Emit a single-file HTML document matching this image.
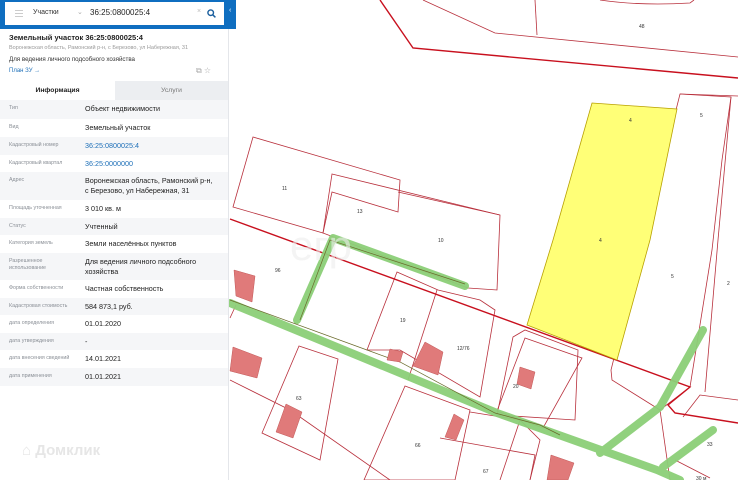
<!DOCTYPE html>
<html><head><meta charset="utf-8"><style>
*{margin:0;padding:0;box-sizing:border-box}
body{width:738px;height:480px;overflow:hidden;font-family:"Liberation Sans","DejaVu Sans",sans-serif;background:#fff;position:relative}
#map{position:absolute;left:0;top:0}
#panel{position:absolute;left:0;top:0;width:229px;height:480px;background:#fff;border-right:1px solid #e4e6ea}
#hdr{position:absolute;left:0;top:0;width:236px;height:29px;background:#0f6ec0}
#inp{position:absolute;left:5px;top:2px;width:219px;height:23px;background:#fff}
.row{position:absolute;left:0;width:228px;font-size:7.2px;color:#222}
.row .l{position:absolute;left:9px;top:5px;font-size:5.3px;color:#8a8f96;line-height:7px}
.row .v{position:absolute;left:85px;top:4px;line-height:10px}
.g{background:#f5f6f8}
a{color:#1d6fb8;text-decoration:none}
</style></head><body>
<svg id="map" width="738" height="480" viewBox="0 0 738 480">
<g fill="none" stroke="#b8303c" stroke-width="0.8">
<polyline points="423,0 495,33 738,57"/>
<line x1="535" y1="0" x2="537" y2="35"/>
<path d="M600,0 Q640,6 690,3 L694,0"/>
<polygon points="253,137 400,180 398,212 332,192 323,233 233,207"/>
<polygon points="332,174 500,215 497,290 468,288 323,233"/>
<polyline points="398,192 500,215"/>
<polygon points="680,94 731,97 722,160 712,250 690,387 660,410 612,380 611,370"/>
<line x1="680" y1="94" x2="738" y2="96"/>
<polyline points="731,97 718,240 705,392"/>
<polygon points="397,272 438,290 480,300 495,310 480,397 400,350 367,350"/>
<polyline points="437,290 408,380"/>
<polygon points="513,337 525,330 578,350 575,420 497,415"/>
<polygon points="525,338 582,358 543,428 497,411"/>
<polygon points="299,346 338,359 320,460 262,433"/>
<polyline points="230,380 290,410 390,480"/>
<polygon points="405,386 470,410 455,480 364,480"/>
<polyline points="470,412 520,420 540,440 530,480"/>
<polyline points="440,438 535,455 530,480"/>
<polyline points="520,420 500,480"/>
<polyline points="660,410 670,480"/>
<polyline points="683,417 700,395 738,400"/>
<polyline points="675,460 710,478"/>
<polyline points="230,318 236,305"/>
</g>
<g fill="none" stroke="#c8101e" stroke-width="1.4">
<polyline points="380,0 413,48 738,78"/>
<polyline points="230,219 690,387 668,405 675,413 738,423"/>
</g>
<polygon points="592,103 677,109 650,240 617,360 527,325 553,240" fill="#ffff77" stroke="#b8a000" stroke-width="0.8"/>
<g fill="none" stroke="#8ccf78" stroke-width="8" stroke-linecap="round" stroke-linejoin="round" opacity="0.95">
<polyline points="230,303 497,413 657,470 680,480"/>
<polyline points="297,320 333,238 465,286"/>
<polyline points="703,330 660,407 600,453"/>
<polyline points="713,430 663,467"/>
</g>
<g fill="none" stroke="#6a6a2a" stroke-width="0.7">
<polyline points="230,300 367,350 400,362 495,413 540,425 560,435"/>
<polyline points="300,320 330,240 465,284"/>
</g>
<g fill="#e07a7a" stroke="#c25858" stroke-width="0.5">
<polygon points="234,270 255,276 252,302 236,296"/>
<polygon points="233,347 262,358 257,378 230,371"/>
<polygon points="390,349 403,352 400,362 387,360"/>
<polygon points="425,342 443,352 438,375 413,366"/>
<polygon points="520,367 535,372 531,389 517,384"/>
<polygon points="286,404 302,412 293,438 276,432"/>
<polygon points="454,414 464,420 456,440 445,437"/>
<polygon points="551,455 574,463 568,480 547,480"/>
</g>
<g font-size="5" fill="#333" font-family="Liberation Sans,sans-serif">
<text x="639" y="28">48</text><text x="282" y="190">11</text><text x="357" y="213">13</text>
<text x="438" y="242">10</text><text x="629" y="122">4</text><text x="599" y="242">4</text>
<text x="700" y="117">5</text><text x="671" y="278">5</text><text x="727" y="285">2</text>
<text x="275" y="272">96</text><text x="400" y="322">19</text><text x="457" y="350">12/76</text>
<text x="513" y="388">20</text><text x="296" y="400">63</text><text x="415" y="447">66</text>
<text x="483" y="473">67</text><text x="707" y="446">33</text><text x="696" y="480">30 м</text>
</g>
<text x="290" y="260" font-size="42" fill="#eee" font-family="Liberation Sans,sans-serif" opacity="0.6">егр</text>
</svg>

<div id="panel">
<div id="hdr"><div id="inp">
<div style="position:absolute;left:10px;top:8px;width:8px;height:1px;background:#ccc;box-shadow:0 3px #ccc,0 6px #ccc"></div>
<div style="position:absolute;left:28px;top:7px;font-size:7px;color:#333">Участки</div>
<div style="position:absolute;left:72px;top:6px;font-size:7px;color:#aaa">⌄</div>
<div style="position:absolute;left:85px;top:6px;font-size:8px;color:#222">36:25:0800025:4</div>
<div style="position:absolute;left:192px;top:6px;font-size:7px;color:#bbb">×</div>
<svg style="position:absolute;left:202px;top:7px" width="9" height="9"><circle cx="3.7" cy="3.7" r="2.8" fill="none" stroke="#1b5f9e" stroke-width="1.4"/><line x1="5.8" y1="5.8" x2="8.4" y2="8.4" stroke="#1b5f9e" stroke-width="1.5"/></svg>
</div>
<div style="position:absolute;left:229px;top:7px;font-size:7px;color:#fff">‹</div></div>
<div style="position:absolute;left:9px;top:33px;font-size:7.5px;font-weight:bold;color:#222">Земельный участок 36:25:0800025:4</div>
<div style="position:absolute;left:9px;top:45px;font-size:5.5px;color:#999">Воронежская область, Рамонский р-н, с Березово, ул Набережная, 31</div>
<div style="position:absolute;left:9px;top:56px;font-size:6.2px;color:#333">Для ведения личного подсобного хозяйства</div>
<div style="position:absolute;left:9px;top:68px;font-size:6px;color:#1d6fb8">План ЗУ →</div>
<div style="position:absolute;left:196px;top:66px;font-size:8px;color:#aaa">⧉ ☆</div>
<div style="position:absolute;left:0;top:81px;width:115px;height:19px;font-size:6.8px;font-weight:bold;text-align:center;line-height:19px;color:#222">Информация</div>
<div style="position:absolute;left:115px;top:81px;width:113px;height:19px;background:#eceef1;font-size:6.8px;text-align:center;line-height:19px;color:#777">Услуги</div>

<div class="row g" style="top:100px;height:19px"><span class="l">Тип</span><span class="v">Объект недвижимости</span></div>
<div class="row" style="top:119px;height:18px"><span class="l">Вид</span><span class="v">Земельный участок</span></div>
<div class="row g" style="top:137px;height:18px"><span class="l">Кадастровый номер</span><span class="v"><a>36:25:0800025:4</a></span></div>
<div class="row" style="top:155px;height:17px"><span class="l">Кадастровый квартал</span><span class="v"><a>36:25:0000000</a></span></div>
<div class="row g" style="top:172px;height:28px"><span class="l">Адрес</span><span class="v">Воронежская область, Рамонский р-н,<br>с Березово, ул Набережная, 31</span></div>
<div class="row" style="top:200px;height:18px"><span class="l">Площадь уточненная</span><span class="v">3 010 кв. м</span></div>
<div class="row g" style="top:218px;height:17px"><span class="l">Статус</span><span class="v">Учтенный</span></div>
<div class="row" style="top:235px;height:18px"><span class="l">Категория земель</span><span class="v">Земли населённых пунктов</span></div>
<div class="row g" style="top:253px;height:27px"><span class="l">Разрешенное<br>использование</span><span class="v">Для ведения личного подсобного<br>хозяйства</span></div>
<div class="row" style="top:280px;height:18px"><span class="l">Форма собственности</span><span class="v">Частная собственность</span></div>
<div class="row g" style="top:298px;height:17px"><span class="l">Кадастровая стоимость</span><span class="v">584 873,1 руб.</span></div>
<div class="row" style="top:315px;height:18px"><span class="l">дата определения</span><span class="v">01.01.2020</span></div>
<div class="row g" style="top:333px;height:17px"><span class="l">дата утверждения</span><span class="v">-</span></div>
<div class="row" style="top:350px;height:18px"><span class="l">дата внесения сведений</span><span class="v">14.01.2021</span></div>
<div class="row g" style="top:368px;height:18px"><span class="l">дата применения</span><span class="v">01.01.2021</span></div>
<div style="position:absolute;left:22px;top:442px;font-size:15px;font-weight:bold;color:#e6e6e6">⌂ Домклик</div>
</div>
</body></html>
